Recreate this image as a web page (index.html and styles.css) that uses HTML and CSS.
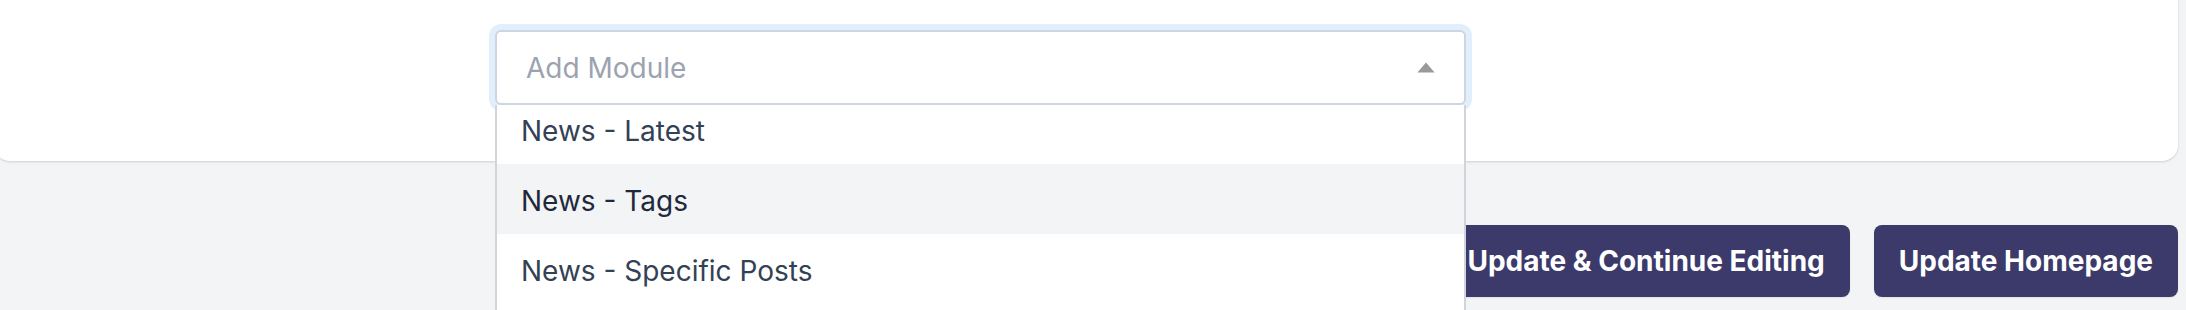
FILE: index.html
```html
<!DOCTYPE html>
<html lang="en">
<head>
<meta charset="utf-8">
<title>Homepage modules</title>
<link rel="stylesheet" href="styles.css">
</head>
<body>
<div class="page">
  <section class="card">
    <div class="select">
      <div class="select-control">
        <span class="select-placeholder">Add Module</span>
        <span class="select-indicator">
          <svg width="18" height="11" viewBox="0 0 18 11" aria-hidden="true"><path d="M9 0.5 L17.6 10.5 L0.4 10.5 Z" fill="#999999"/></svg>
        </span>
      </div>
      <div class="select-menu">
        <ul class="select-list">
          <li class="select-option">News - Latest</li>
          <li class="select-option is-focused">News - Tags</li>
          <li class="select-option">News - Specific Posts</li>
        </ul>
      </div>
    </div>
  </section>
  <div class="actions">
    <button class="btn">Update &amp; Continue Editing</button>
    <button class="btn">Update Homepage</button>
  </div>
</div>
</body>
</html>
```
FILE: styles.css
```css
html, body {
  margin: 0;
  padding: 0;
}
body {
  background: #f3f4f6;
  font-family: "Inter", "Noto Sans", "Liberation Sans", sans-serif;
  overflow: hidden;
  height: 310px;
}
.page {
  padding: 0 8px 0 0;
}
.card {
  margin-top: -40px;
  margin-left: -6px;
  background: #ffffff;
  border-radius: 16px;
  box-shadow: 0 1px 3px rgba(0, 0, 0, 0.1), 0 1px 2px rgba(0, 0, 0, 0.06);
  padding: 70px 0 56px 501px;
}
.select {
  position: relative;
  width: 971px;
}
.select-control {
  box-sizing: border-box;
  height: 75px;
  border: 2px solid #cfd5de;
  border-radius: 6px;
  box-shadow: 0 0 0 6px #e1eefb;
  background: #ffffff;
  display: flex;
  align-items: center;
  padding: 0 29px 0 29px;
}
.select-placeholder {
  flex: 1;
  font-size: 28px;
  color: #9ca3af;
}
.select-indicator {
  display: flex;
  align-items: center;
}
.select-indicator svg {
  display: block;
}
.select-menu {
  position: absolute;
  top: 100%;
  left: 0;
  right: 0;
  height: 205px;
  box-sizing: border-box;
  background: #ffffff;
  border-left: 2px solid #d1d5db;
  border-right: 2px solid #d1d5db;
  overflow: hidden;
  z-index: 10;
}
.select-list {
  list-style: none;
  margin: -11px 0 0 0;
  padding: 0;
}
.select-option {
  box-sizing: border-box;
  height: 70px;
  display: flex;
  align-items: center;
  padding: 3px 0 0 24px;
  font-size: 28px;
  color: #334155;
}
.select-option.is-focused {
  background: #f3f4f6;
  color: #1e293b;
}
.actions {
  margin-top: 64px;
  display: flex;
  justify-content: flex-end;
  gap: 24px;
}
.btn {
  height: 72px;
  padding: 0 25px;
  border: 0;
  border-radius: 8px;
  background: #3c3a6a;
  color: #ffffff;
  font-family: "Inter", "Noto Sans", "Liberation Sans", sans-serif;
  font-size: 28px;
  font-weight: 700;
  box-shadow: 0 1px 2px rgba(0, 0, 0, 0.08);
  white-space: nowrap;
}
```
